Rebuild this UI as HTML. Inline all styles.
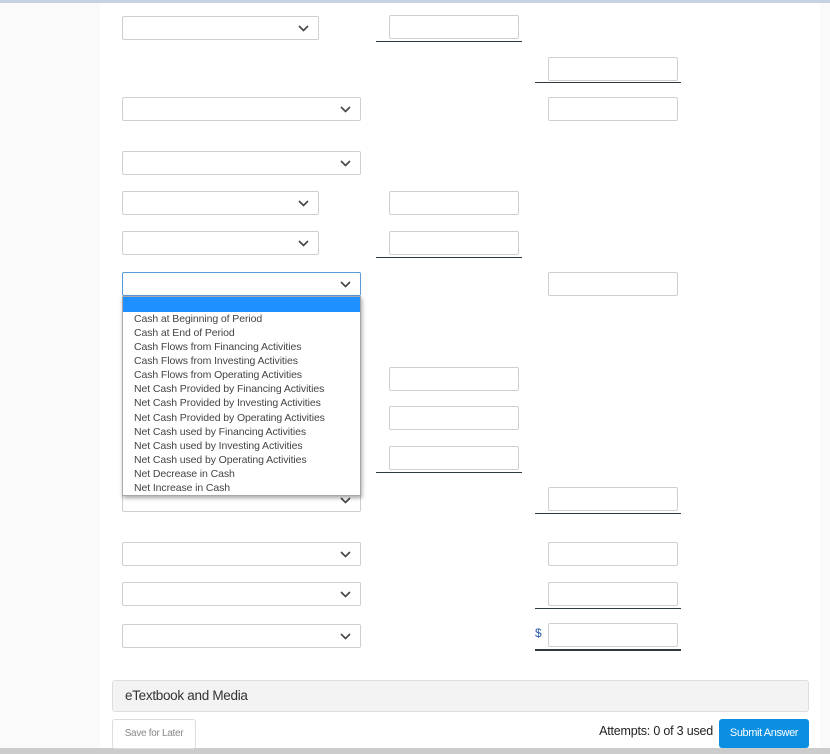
<!DOCTYPE html>
<html><head><style>
*{margin:0;padding:0;box-sizing:border-box}
body{width:830px;height:754px;overflow:hidden;background:#fafafa;position:relative;font-family:"Liberation Sans",sans-serif}
.top{position:absolute;left:0;top:0;width:830px;height:3px;background:#c8d1e0}
.panel{position:absolute;left:100px;top:3px;width:720px;height:745px;background:#fff}
.bot{position:absolute;left:0;top:748px;width:830px;height:6px;background:#cccccc}
.sel,.inp{position:absolute;height:24px;border:1px solid #cfcfcf;background:#fff;border-radius:2px}
.sel svg{position:absolute;right:9px;top:8px}
.ul{position:absolute;height:1px;background:#2f3a40}
.dd{position:absolute;left:122px;top:296px;width:239px;height:200px;background:#fff;border:1px solid #a8a8a8;box-shadow:1px 2px 4px rgba(0,0,0,.35);font-size:10.5px;color:#444;letter-spacing:-0.1px}
.dd .hl{height:15px;background:#1e90ff;margin:0}
.dd div.it{position:absolute;left:11px;line-height:14px;white-space:nowrap}
</style></head><body>
<div class="top"></div>
<div class="panel"></div>
<div class="bot"></div>

<div class="sel" style="left:122px;top:16px;width:197px"><svg width="11" height="7"><path d="M1 1l4.5 4.5L10 1" stroke="#444" stroke-width="1.6" fill="none"/></svg></div>
<div class="sel" style="left:122px;top:97px;width:239px"><svg width="11" height="7"><path d="M1 1l4.5 4.5L10 1" stroke="#444" stroke-width="1.6" fill="none"/></svg></div>
<div class="sel" style="left:122px;top:151px;width:239px"><svg width="11" height="7"><path d="M1 1l4.5 4.5L10 1" stroke="#444" stroke-width="1.6" fill="none"/></svg></div>
<div class="sel" style="left:122px;top:191px;width:197px"><svg width="11" height="7"><path d="M1 1l4.5 4.5L10 1" stroke="#444" stroke-width="1.6" fill="none"/></svg></div>
<div class="sel" style="left:122px;top:231px;width:197px"><svg width="11" height="7"><path d="M1 1l4.5 4.5L10 1" stroke="#444" stroke-width="1.6" fill="none"/></svg></div>
<div class="sel" style="left:122px;top:272px;width:239px;border-color:#5b9bd5"><svg width="11" height="7"><path d="M1 1l4.5 4.5L10 1" stroke="#444" stroke-width="1.6" fill="none"/></svg></div>
<div class="sel" style="left:122px;top:488px;width:239px"><svg width="11" height="7"><path d="M1 1l4.5 4.5L10 1" stroke="#444" stroke-width="1.6" fill="none"/></svg></div>
<div class="sel" style="left:122px;top:542px;width:239px"><svg width="11" height="7"><path d="M1 1l4.5 4.5L10 1" stroke="#444" stroke-width="1.6" fill="none"/></svg></div>
<div class="sel" style="left:122px;top:582px;width:239px"><svg width="11" height="7"><path d="M1 1l4.5 4.5L10 1" stroke="#444" stroke-width="1.6" fill="none"/></svg></div>
<div class="sel" style="left:122px;top:624px;width:239px"><svg width="11" height="7"><path d="M1 1l4.5 4.5L10 1" stroke="#444" stroke-width="1.6" fill="none"/></svg></div>

<div class="inp" style="left:389px;top:15px;width:130px"></div>
<div class="ul" style="left:376px;top:41px;width:146px"></div>
<div class="inp" style="left:389px;top:191px;width:130px"></div>
<div class="inp" style="left:389px;top:231px;width:130px"></div>
<div class="ul" style="left:376px;top:257px;width:146px"></div>
<div class="inp" style="left:389px;top:367px;width:130px"></div>
<div class="inp" style="left:389px;top:406px;width:130px"></div>
<div class="inp" style="left:389px;top:446px;width:130px"></div>
<div class="ul" style="left:376px;top:472px;width:146px"></div>

<div class="inp" style="left:548px;top:57px;width:130px"></div>
<div class="ul" style="left:535px;top:82px;width:146px"></div>
<div class="inp" style="left:548px;top:97px;width:130px"></div>
<div class="inp" style="left:548px;top:272px;width:130px"></div>
<div class="inp" style="left:548px;top:487px;width:130px"></div>
<div class="ul" style="left:535px;top:513px;width:146px"></div>
<div class="inp" style="left:548px;top:542px;width:130px"></div>
<div class="inp" style="left:548px;top:582px;width:130px"></div>
<div class="ul" style="left:535px;top:608px;width:146px"></div>
<div style="position:absolute;left:535px;top:626px;font-size:12px;color:#2a5caa">$</div>
<div class="inp" style="left:548px;top:623px;width:130px"></div>
<div class="ul" style="left:535px;top:649px;width:146px;height:2px"></div>

<div class="dd">
<div class="hl"></div>
<div class="it" style="top:15px">Cash at Beginning of Period</div>
<div class="it" style="top:29px">Cash at End of Period</div>
<div class="it" style="top:43px">Cash Flows from Financing Activities</div>
<div class="it" style="top:57px">Cash Flows from Investing Activities</div>
<div class="it" style="top:71px">Cash Flows from Operating Activities</div>
<div class="it" style="top:85px">Net Cash Provided by Financing Activities</div>
<div class="it" style="top:99px">Net Cash Provided by Investing Activities</div>
<div class="it" style="top:114px">Net Cash Provided by Operating Activities</div>
<div class="it" style="top:128px">Net Cash used by Financing Activities</div>
<div class="it" style="top:142px">Net Cash used by Investing Activities</div>
<div class="it" style="top:156px">Net Cash used by Operating Activities</div>
<div class="it" style="top:170px">Net Decrease in Cash</div>
<div class="it" style="top:184px">Net Increase in Cash</div>
</div>

<div style="position:absolute;left:112px;top:680px;width:697px;height:32px;background:#f3f3f3;border:1px solid #ddd;border-radius:3px;font-size:13.5px;color:#333;line-height:30px;padding-left:12px;letter-spacing:-0.3px">eTextbook and Media</div>
<div style="position:absolute;left:112px;top:719px;width:84px;height:30px;background:#fff;border:1px solid #ddd;border-radius:3px;font-size:10px;color:#888;line-height:28px;text-align:center;letter-spacing:-0.3px">Save for Later</div>
<div style="position:absolute;right:117px;top:724px;font-size:12.5px;color:#222;letter-spacing:-0.2px">Attempts: 0 of 3 used</div>
<div style="position:absolute;left:719px;top:719px;width:90px;height:29px;background:#0b8fe2;border-radius:3px;font-size:11px;color:#fff;line-height:28px;text-align:center;letter-spacing:-0.4px">Submit Answer</div>
</body></html>
